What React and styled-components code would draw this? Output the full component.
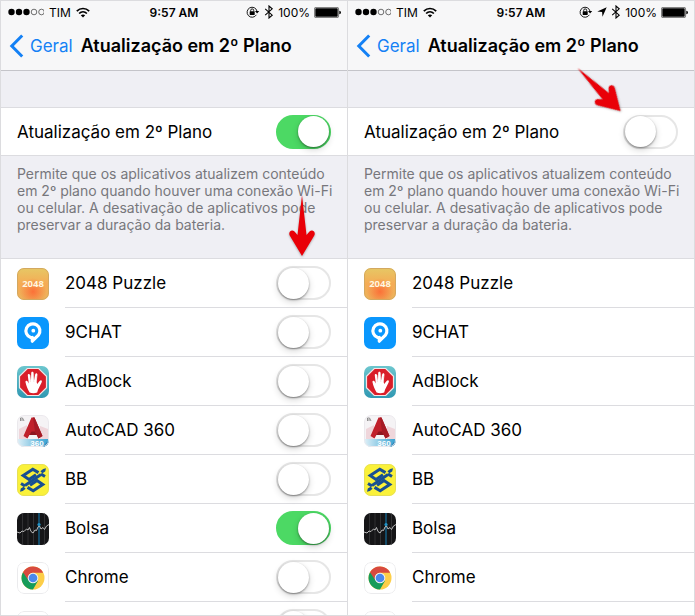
import React from 'react';
import styled, { createGlobalStyle } from 'styled-components';

const GlobalStyle = createGlobalStyle`
    * {
        box-sizing: border-box;
    }

    body {
        margin: 0;
        background: #ffffff;
        color: #000000;
        font-family: Inter, 'Liberation Sans', sans-serif;
    }
`;

const Screens = styled.main`
    display: grid;
    grid-template-columns: 1fr 1fr;
    height: 100vh;
    border: 1px solid #dcdcdf;
    border-right: none;
    overflow: hidden;
`;

const Phone = styled.section`
    position: relative;
    min-width: 0;
    background: #efeff4;
    border-right: 1px solid #dcdcdf;
`;

const Header = styled.header`
    background: #f7f7f8;
    border-bottom: 1px solid #c4c4c9;
`;

const StatusBar = styled.div`
    display: grid;
    grid-template-columns: 1fr auto 1fr;
    align-items: center;
    height: 22px;
    padding: 0 6px;
    font-size: 12px;
`;

const Carrier = styled.div`
    display: flex;
    align-items: center;
    gap: 5px;
`;

const Clock = styled.div`
    font-weight: 600;
`;

const Indicators = styled.div`
    display: flex;
    align-items: center;
    justify-content: flex-end;
    gap: 4px;
`;

const NavBar = styled.nav`
    display: flex;
    align-items: center;
    gap: 8px;
    height: 47px;
    padding: 0 8px 2px;
    font-size: 17px;
    white-space: nowrap;
`;

const BackLink = styled.a`
    display: flex;
    align-items: center;
    gap: 6px;
    color: #1481f5;
    text-decoration: none;
`;

const Title = styled.h1`
    margin: 0;
    font-size: 18px;
    font-weight: 600;
`;

const MainSetting = styled.div`
    display: flex;
    align-items: center;
    justify-content: space-between;
    height: 49px;
    margin-top: 36px;
    padding: 0 16px;
    background: #ffffff;
    border-top: 1px solid #dcdce0;
    border-bottom: 1px solid #dcdce0;
    font-size: 17px;
`;

const Description = styled.p`
    margin: 0;
    padding: 9px 16px 25px;
    color: #77777c;
    font-size: 14px;
    line-height: 17px;
    white-space: nowrap;
`;

const AppList = styled.ul`
    margin: 0;
    padding: 0;
    list-style: none;
    background: #ffffff;
    border-top: 1px solid #dcdce0;
`;

const AppRow = styled.li`
    display: flex;
    align-items: center;
    gap: 16px;
    height: 49px;
    padding-left: 16px;
    font-size: 17px;
`;

const AppBody = styled.div`
    display: flex;
    flex: 1;
    align-items: center;
    justify-content: space-between;
    height: 49px;
    padding-right: 16px;
    border-bottom: 1px solid #dcdce0;
`;

const Switch = styled.input`
    appearance: none;
    display: flex;
    flex: none;
    align-items: center;
    justify-content: ${(props) => (props.checked ? 'flex-end' : 'flex-start')};
    width: 55px;
    height: 34px;
    margin: 0;
    border: ${(props) => (props.checked ? '2px solid #4cd964' : '2px solid #e6e6e6')};
    border-radius: 17px;
    background: ${(props) => (props.checked ? '#4cd964' : '#ffffff')};
    cursor: pointer;

    &::before {
        content: '';
        width: 31px;
        height: 31px;
        border-radius: 50%;
        background: #ffffff;
        box-shadow: 0 1px 2px rgba(0, 0, 0, 0.4), 0 3px 7px rgba(0, 0, 0, 0.16);
    }
`;

const AppIcon = styled.svg`
    flex: none;
    width: 32px;
    height: 32px;
    border-radius: 7px;
`;

const Pointer = styled.svg`
    position: absolute;
    top: ${(props) => props.$top}px;
    right: ${(props) => props.$right}px;
    transform: rotate(${(props) => props.$angle}deg);
    overflow: visible;
    pointer-events: none;
    filter: drop-shadow(0 1px 1px rgba(0, 0, 0, 0.3));
`;

const SignalDots = () => (
    <svg width='37' height='8' viewBox='0 0 37 8'>
        {[0, 1, 2, 3, 4].map((i) => (
            <circle
                key={i}
                cx={4.5 + i * 7.5}
                cy='4'
                r={i < 3 ? 3.2 : 2.8}
                fill={i < 3 ? '#000' : 'none'}
                stroke={i < 3 ? 'none' : '#333'}
                strokeWidth='0.7'
            />
        ))}
    </svg>
);

const WifiIcon = () => (
    <svg width='14' height='11' viewBox='0 0 14 11' fill='none' stroke='#000' strokeWidth='1.7'>
        <path d='M0.8 4.2C4.4 0.6 9.6 0.6 13.2 4.2' />
        <path d='M3.1 6.5C5.4 4.3 8.6 4.3 10.9 6.5' />
        <path d='M7 10.6L4.8 8.3C6 7.2 8 7.2 9.2 8.3Z' fill='#000' stroke='none' />
    </svg>
);

const RotationLockIcon = () => (
    <svg width='14' height='12' viewBox='0 0 14 12'>
        <path d='M10.4 8.8A5 5 0 1 1 11 5.2' fill='none' stroke='#000' strokeWidth='0.9' />
        <path d='M9 5H13.2L11.1 7.6Z' />
        <rect x='3.7' y='5.3' width='5' height='3.7' rx='0.4' />
        <path d='M4.7 5.5V4.4A1.5 1.5 0 0 1 7.7 4.4V5.5' fill='none' stroke='#000' strokeWidth='0.9' />
    </svg>
);

const LocationIcon = () => (
    <svg width='10' height='10' viewBox='0 0 10 10'>
        <path d='M9.7 0.3L5.5 9.7L5.1 4.9L0.3 4.5Z' />
    </svg>
);

const BluetoothIcon = () => (
    <svg width='10' height='14' viewBox='0 0 10 14' fill='none' stroke='#000' strokeWidth='1.1'>
        <path d='M1.2 3.8L8.2 10.2L5 13V1L8.2 3.8L1.2 10.2' />
    </svg>
);

const BatteryIcon = () => (
    <svg width='27' height='11' viewBox='0 0 27 11'>
        <rect x='0.4' y='0.4' width='24.2' height='10.2' rx='1.4' fill='none' stroke='#555' strokeWidth='0.8' />
        <rect x='1.3' y='1.3' width='22.4' height='8.4' rx='0.6' />
        <path d='M25.3 3.7Q27 4 27 5.5Q27 7 25.3 7.3Z' />
    </svg>
);

const Puzzle2048Icon = () => (
    <AppIcon viewBox='0 0 32 32'>
        <defs>
            <linearGradient id='puzzle-base' x1='0' y1='0' x2='0' y2='1'>
                <stop offset='0' stopColor='#e6c865' />
                <stop offset='0.5' stopColor='#f5ab55' />
                <stop offset='1' stopColor='#ecb45c' />
            </linearGradient>
            <radialGradient id='puzzle-glow' cx='0.5' cy='0.74' r='0.42'>
                <stop offset='0' stopColor='#fb7138' />
                <stop offset='1' stopColor='#fb7138' stopOpacity='0' />
            </radialGradient>
        </defs>
        <rect width='32' height='32' fill='url(#puzzle-base)' />
        <rect width='32' height='32' fill='url(#puzzle-glow)' />
        <rect x='0.5' y='0.5' width='31' height='31' rx='6.5' fill='none' stroke='#d3a860' />
        <text x='16' y='19' textAnchor='middle' fontFamily='Open Sans' fontSize='9.5' fontWeight='700' fill='#fff6df'>
            2048
        </text>
    </AppIcon>
);

const NineChatIcon = () => (
    <AppIcon viewBox='0 0 32 32'>
        <rect width='32' height='32' fill='#0a97fd' />
        <path
            d='M13.7 20.5A7 7 0 1 1 21.4 18.2L15.3 24.2V20.3'
            fill='none'
            stroke='#fff'
            strokeWidth='3.2'
            strokeLinejoin='round'
            strokeLinecap='round'
        />
        <circle cx='16.3' cy='13.7' r='1.9' fill='#fff' />
    </AppIcon>
);

const AdBlockIcon = () => (
    <AppIcon viewBox='0 0 32 32'>
        <defs>
            <linearGradient id='adblock-base' x1='0' y1='0' x2='0' y2='1'>
                <stop offset='0' stopColor='#6cc6ce' />
                <stop offset='1' stopColor='#3098b2' />
            </linearGradient>
        </defs>
        <rect width='32' height='32' fill='url(#adblock-base)' />
        <path
            d='M10.3 2.5H21.7L29.5 10.3V21.7L21.7 29.5H10.3L2.5 21.7V10.3Z'
            fill='#d91e29'
            stroke='#f4e4e4'
            strokeWidth='1.2'
        />
        <path
            d='M12.6 26.5C11 24 9.2 20 8.5 16.3C8.2 14.6 10.2 14.4 10.8 15.8L11.8 17.6L10.8 9.5C10.6 7.7 12.7 7.6 13 9.3L14 14.5L14.2 7.2C14.3 5.4 16.5 5.4 16.6 7.2L17 14.4L18.2 8.3C18.6 6.7 20.6 7.1 20.4 8.8L19.7 16.2L20.2 18L22.6 15C24 13.6 25.6 14.6 24.6 16.4L21 23.8L20.2 26.5Q16.4 28 12.6 26.5Z'
            fill='#fff'
        />
        <path d='M13.4 9V16M16.8 8V16M19.6 10V16' stroke='#e6b8bc' strokeWidth='0.4' />
    </AppIcon>
);

const AutoCadIcon = () => (
    <AppIcon viewBox='0 0 32 32'>
        <defs>
            <linearGradient id='autocad-strip' x1='0' y1='0' x2='1' y2='0'>
                <stop offset='0' stopColor='#e1f1f8' />
                <stop offset='1' stopColor='#329fd0' />
            </linearGradient>
        </defs>
        <rect width='32' height='32' fill='#f5f3f5' />
        <path d='M2 14L10 10V24H2ZM23 11L31 14V24H23Z' fill='#efd6db' />
        <rect y='24' width='32' height='8' fill='url(#autocad-strip)' />
        <path d='M14.5 2.5H17.5L25.5 21L21.5 23.5L19.8 20H12.4L10.5 23.5L6.5 21Z' fill='#c0202b' />
        <path d='M12.4 20L14.6 16.5H18L19.8 20Z' fill='#8e1620' />
        <path d='M17.5 2.5L25.5 21L21.5 23.5L18 16.5L16 2.5Z' fill='#a51a25' />
        <path d='M3.5 6V3H5.5L7 6M5 4V6' fill='none' stroke='#666' strokeWidth='0.7' />
        <path d='M31 26V32H26Z' fill='#126fab' />
        <text x='20' y='31' textAnchor='middle' fontFamily='Liberation Sans' fontSize='8' fontWeight='700' fill='#fff'>
            360
        </text>
        <rect x='0.5' y='0.5' width='31' height='31' rx='6.5' fill='none' stroke='#ebe9ed' />
    </AppIcon>
);

const BBIcon = () => (
    <AppIcon viewBox='0 0 32 32'>
        <rect width='32' height='32' fill='#faf13a' />
        <g fill='none' stroke='#184f92' strokeWidth='3'>
            <path d='M21.5 8.6L15.8 5.2L6.2 11.6L12 15.4L19 10.8' />
            <path d='M10.5 23.4L16.2 26.8L25.8 20.4L20 16.6L13 21.2' />
            <path d='M8 21.4L24 10.6' />
            <path d='M4 19.4L8 21.9M24 10.1L28 12.6' />
        </g>
        <g fill='#184f92'>
            <path d='M23.4 7.2L26.2 5L29 4.2L28.2 7.4L25.4 9.2Z' />
            <path d='M8.6 24.8L5.8 27L3 27.8L3.8 24.6L6.6 22.8Z' />
        </g>
        <rect x='0.5' y='0.5' width='31' height='31' rx='6.5' fill='none' stroke='#e6df58' />
    </AppIcon>
);

const StocksIcon = () => (
    <AppIcon viewBox='0 0 32 32'>
        <rect width='32' height='32' fill='#151517' />
        <path d='M5.5 0V32M11 0V32M16.5 0V32M27.5 0V32' stroke='#38383b' strokeWidth='0.8' />
        <path d='M22 0V32' stroke='#15709e' strokeWidth='1.2' />
        <path
            d='M0 19L3 20L5 18L7 18.5L9.5 16L11 17L12.5 14.5L14 18.5L16 20L18 17L19.5 17.5L21 14L22.5 13L24 16L26 14.5L27.5 16.5L29.5 13L32 11.5'
            fill='none'
            stroke='#cccccc'
            strokeWidth='0.9'
        />
        <circle cx='22' cy='11.5' r='1.6' fill='#2191c4' />
    </AppIcon>
);

const ChromeIcon = () => (
    <AppIcon viewBox='0 0 32 32'>
        <rect x='0.5' y='0.5' width='31' height='31' rx='6.5' fill='#fff' stroke='#ebebed' />
        <circle cx='16' cy='16' r='11.5' fill='#fdce48' />
        <path d='M16 16L6 10.3A11.5 11.5 0 0 0 16 27.5L21 18.7Z' fill='#169c5a' />
        <path d='M6 10.3A11.5 11.5 0 0 1 26.2 10.8H16A5.2 5.2 0 0 0 11.5 18.6Z' fill='#d84a3f' />
        <circle cx='16' cy='16' r='5.3' fill='#f1f1f1' />
        <circle cx='16' cy='16' r='4.3' fill='#4b88ed' />
    </AppIcon>
);

const LastIcon = () => (
    <AppIcon viewBox='0 0 32 32'>
        <rect x='0.5' y='0.5' width='31' height='31' rx='6.5' fill='#fff' stroke='#ebebed' />
        <path d='M11 7H14V5H20V9H11Z' fill='#e7cd76' />
    </AppIcon>
);

const apps = [
    { id: 'puzzle', name: '2048 Puzzle', icon: Puzzle2048Icon, active: false },
    { id: 'ninechat', name: '9CHAT', icon: NineChatIcon, active: false },
    { id: 'adblock', name: 'AdBlock', icon: AdBlockIcon, active: false },
    { id: 'autocad', name: 'AutoCAD 360', icon: AutoCadIcon, active: false },
    { id: 'bb', name: 'BB', icon: BBIcon, active: false },
    { id: 'bolsa', name: 'Bolsa', icon: StocksIcon, active: true },
    { id: 'chrome', name: 'Chrome', icon: ChromeIcon, active: false },
    { id: 'last', name: '', icon: LastIcon, active: false },
];

const SettingsScreen = ({ id, refresh, location, pointer }) => {
    const [enabled, setEnabled] = React.useState(refresh);
    const [active, setActive] = React.useState(apps.filter((app) => app.active).map((app) => app.id));

    const toggleApp = (appId) => {
        setActive(active.includes(appId) ? active.filter((x) => x !== appId) : [...active, appId]);
    };

    return (
        <Phone>
            <Header>
                <StatusBar>
                    <Carrier>
                        <SignalDots />
                        <span>TIM</span>
                        <WifiIcon />
                    </Carrier>
                    <Clock>9:57 AM</Clock>
                    <Indicators>
                        <RotationLockIcon />
                        {location && <LocationIcon />}
                        <BluetoothIcon />
                        <span>100%</span>
                        <BatteryIcon />
                    </Indicators>
                </StatusBar>
                <NavBar>
                    <BackLink href='#geral'>
                        <svg width='15' height='24' viewBox='0 0 15 24' fill='none' stroke='#1481f5' strokeWidth='3'>
                            <path d='M13.2 1.5L2.8 12L13.2 22.5' />
                        </svg>
                        Geral
                    </BackLink>
                    <Title>Atualização em 2º Plano</Title>
                </NavBar>
            </Header>
            <MainSetting>
                <label htmlFor={`${id}-refresh`}>Atualização em 2º Plano</label>
                <Switch
                    id={`${id}-refresh`}
                    type='checkbox'
                    role='switch'
                    checked={enabled}
                    onChange={() => setEnabled(!enabled)}
                />
            </MainSetting>
            <Description>
                Permite que os aplicativos atualizem conteúdo
                <br />
                em 2º plano quando houver uma conexão Wi-Fi
                <br />
                ou celular. A desativação de aplicativos pode
                <br />
                preservar a duração da bateria.
            </Description>
            <AppList>
                {apps.map((app) => (
                    <AppRow key={app.id}>
                        <app.icon />
                        <AppBody>
                            <label htmlFor={enabled ? `${id}-${app.id}` : undefined}>{app.name}</label>
                            {enabled && (
                                <Switch
                                    id={`${id}-${app.id}`}
                                    type='checkbox'
                                    role='switch'
                                    aria-label={app.name || 'Aplicativo'}
                                    checked={active.includes(app.id)}
                                    onChange={() => toggleApp(app.id)}
                                />
                            )}
                        </AppBody>
                    </AppRow>
                ))}
            </AppList>
            <Pointer
                width='26'
                height='61'
                viewBox='0 0 26 61'
                $top={pointer.top}
                $right={pointer.right}
                $angle={pointer.angle}
            >
                <path
                    d='M13 0L17.5 40L20.5 36.5Q23 34.5 25 36.5Q26.5 38.5 25 41L13 61L1 41Q-0.5 38.5 1 36.5Q3 34.5 5.5 36.5L8.5 40Z'
                    fill='#e90008'
                />
            </Pointer>
        </Phone>
    );
};

const App = () => (
    <>
        <GlobalStyle />
        <Screens>
            <SettingsScreen id='on' refresh pointer={{ top: 194, right: 32, angle: 0 }} />
            <SettingsScreen id='off' refresh={false} location pointer={{ top: 58, right: 82, angle: -45 }} />
        </Screens>
    </>
);

export default App;
